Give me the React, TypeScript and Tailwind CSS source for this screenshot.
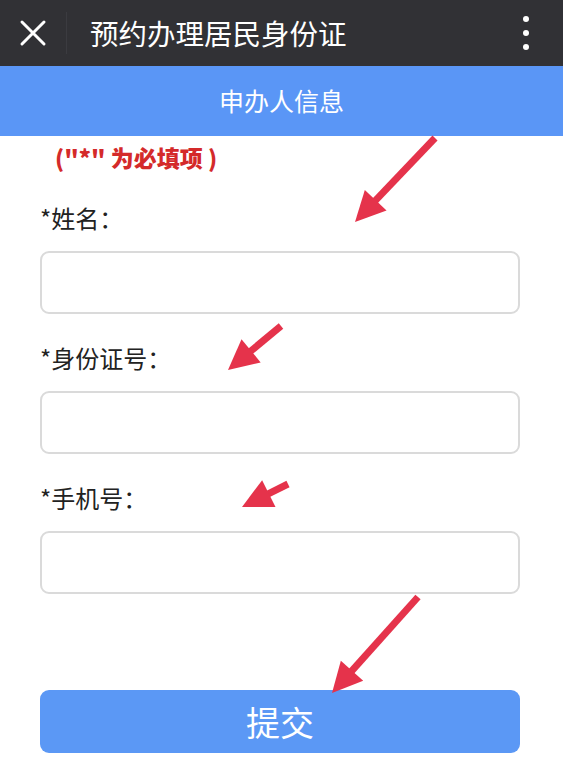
import React from "react";

const font = { fontFamily: '"Noto Sans CJK SC", "Noto Sans", sans-serif' };

function Arrow({ x1, y1, x2, y2 }: { x1: number; y1: number; x2: number; y2: number }) {
  // shaft + triangular head pointing at (x2, y2)
  const dx = x2 - x1;
  const dy = y2 - y1;
  const len = Math.sqrt(dx * dx + dy * dy);
  const ux = dx / len;
  const uy = dy / len;
  const headLen = 30;
  const headW = 15;
  const bx = x2 - ux * headLen;
  const by = y2 - uy * headLen;
  const px = -uy;
  const py = ux;
  return (
    <g>
      <line x1={x1} y1={y1} x2={bx + ux * 4} y2={by + uy * 4} stroke="#e5334b" strokeWidth={7} />
      <polygon
        points={`${x2},${y2} ${bx + px * headW},${by + py * headW} ${bx - px * headW},${by - py * headW}`}
        fill="#e5334b"
      />
    </g>
  );
}

function Field({ label, first }: { label: string; first?: boolean }) {
  return (
    <div className={first ? "mt-[30px]" : "mt-[28px]"}>
      <label className="block text-[24px] leading-[32px] text-[#222]">{label}</label>
      <input
        type="text"
        className="mt-[17px] block h-[63px] w-full rounded-[9px] border-2 border-[#dadada] bg-white px-3 outline-none"
      />
    </div>
  );
}

export default function App() {
  return (
    <div className="relative h-[763px] w-[563px] overflow-hidden bg-white" style={font}>
      <div className="flex h-[66px] items-center bg-[#313135]">
        <div className="flex w-[66px] items-center justify-center">
          <svg width="28" height="28" viewBox="0 0 28 28">
            <path d="M3 3 L25 25 M25 3 L3 25" stroke="white" strokeWidth="3" strokeLinecap="round" />
          </svg>
        </div>
        <div className="h-[42px] w-px bg-[#3b3b40]" />
        <div className="ml-[23px] flex-1 text-[28.5px] leading-none text-white">预约办理居民身份证</div>
        <div className="mr-[34px] flex flex-col gap-[8px]">
          <span className="h-[6px] w-[6px] rounded-full bg-white" />
          <span className="h-[6px] w-[6px] rounded-full bg-white" />
          <span className="h-[6px] w-[6px] rounded-full bg-white" />
        </div>
      </div>

      <div className="flex h-[70px] items-center justify-center bg-[#5a96f6] text-[25px] text-white">
        申办人信息
      </div>

      <div className="pl-[40px] pr-[43px]">
        <div className="mt-[6px] pl-[15px] text-[23px] font-black leading-[30px] text-[#d42a2a]">("*" 为必填项 )</div>
        <Field label="*姓名：" first />
        <Field label="*身份证号：" />
        <Field label="*手机号：" />
        <button
          type="submit"
          className="mt-[96px] flex h-[63px] w-full items-center justify-center rounded-[9px] bg-[#5b98f5] text-[34px] text-white"
        >
          提交
        </button>
      </div>

      <svg className="pointer-events-none absolute left-0 top-0" width="563" height="763">
        <Arrow x1={435} y1={138} x2={355} y2={222} />
        <Arrow x1={281} y1={326} x2={228} y2={370} />
        <Arrow x1={288} y1={484} x2={242} y2={507} />
        <Arrow x1={418} y1={597} x2={332} y2={693} />
      </svg>
    </div>
  );
}
